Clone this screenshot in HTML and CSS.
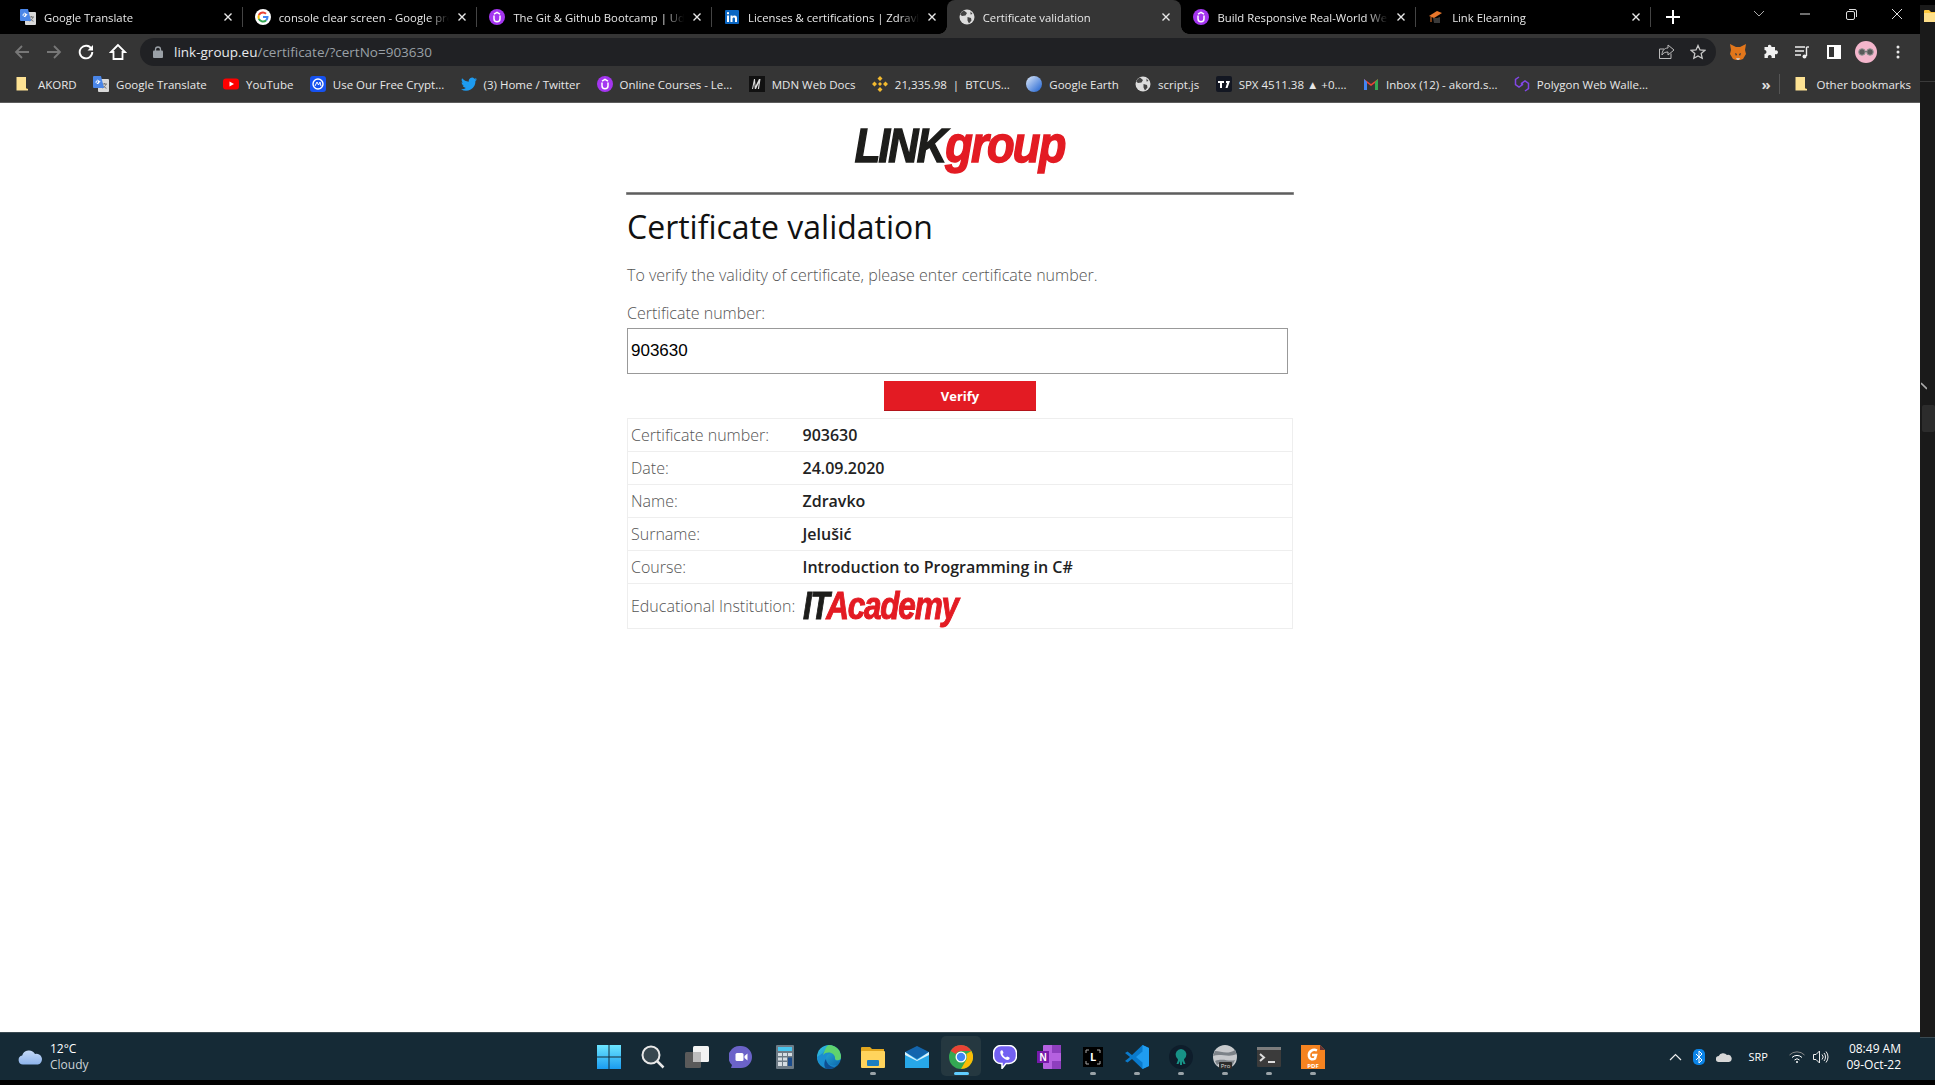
FILE: index.html
```html
<!DOCTYPE html>
<html lang="en">
<head>
<meta charset="utf-8">
<title>Certificate validation</title>
<link rel="stylesheet" href="styles.css">
</head>
<body>
<svg class="defs" width="0" height="0" aria-hidden="true">
  <symbol id="i-udemy" viewBox="0 0 16 16"><circle cx="8" cy="8" r="8" fill="#a435f0"/><path d="M5 6.5v3.2a3 3 0 0 0 6 0V6.500M5 5.200 8 3.400l3 1.800" fill="none" stroke="#fff" stroke-width="1.500"/></symbol>
  <symbol id="i-gt" viewBox="0 0 16 16"><rect x="5" y="3" width="11" height="13" rx="1" fill="#d9d9d9"/><path d="M9 8h5M11.500 7v1M13 8c-.5 2-2 3.500-3.500 4M10 9.500c.8 1.300 2 2.300 3.500 2.800" stroke="#777" fill="none"/><path d="M1 0h7l3 12H1a1 1 0 0 1-1-1V1a1 1 0 0 1 1-1z" fill="#4a86e8"/><path d="M7.300 5.400H5v1.100h1.200a1.600 1.600 0 1 1-.4-1.700" fill="none" stroke="#fff"/></symbol>
  <symbol id="i-g" viewBox="0 0 16 16"><circle cx="8" cy="8" r="8" fill="#fff"/><path d="M8 3.500a4.500 4.500 0 0 1 3 1.200" stroke="#ea4335" stroke-width="2" fill="none"/><path d="M8 3.500A4.500 4.500 0 0 0 3.900 6.200" stroke="#ea4335" stroke-width="2" fill="none"/><path d="M3.900 6.200a4.500 4.500 0 0 0 0 3.600" stroke="#fbbc05" stroke-width="2" fill="none"/><path d="M3.900 9.800A4.500 4.500 0 0 0 11.200 11.200" stroke="#34a853" stroke-width="2" fill="none"/><path d="M11.200 11.200A4.500 4.500 0 0 0 12.500 8H8" stroke="#4285f4" stroke-width="2" fill="none"/></symbol>
  <symbol id="i-globe" viewBox="0 0 16 16"><circle cx="8" cy="8" r="7.500" fill="#ddd"/><path d="M5 1.500 8 4 6.500 6.500 3 7 1.200 5.500A7.500 7.500 0 0 1 5 1.500zM8.500 8l3.500 1 .5 2.500-2.500 3-1.500-3zM11.500 2.500 13.500 5l-2 .5z" fill="#444"/></symbol>
  <symbol id="i-x" viewBox="0 0 10 10"><path d="M1.500 1.500l7 7m0-7-7 7" stroke="#e8e8e8" stroke-width="1.400" fill="none"/></symbol>
  <symbol id="i-folder" viewBox="0 0 12 14"><path d="M.5 0h9.500v12h2v1.500H.5z" fill="#fde293"/><path d="M10 11l2 1h-2z" fill="#d8b64f"/></symbol>
</svg>
<div class="screen">
  <div class="desktop">
    <div class="tabstrip">
      <div class="tab"><svg class="ic"><use href="#i-gt"/></svg><span class="tab-title">Google Translate</span><svg class="tab-x"><use href="#i-x"/></svg></div>
      <div class="tab"><svg class="ic"><use href="#i-g"/></svg><span class="tab-title">console clear screen - Google pretraga</span><svg class="tab-x"><use href="#i-x"/></svg></div>
      <div class="tab"><svg class="ic"><use href="#i-udemy"/></svg><span class="tab-title">The Git &amp; Github Bootcamp | Udemy</span><svg class="tab-x"><use href="#i-x"/></svg></div>
      <div class="tab"><svg class="ic" viewBox="0 0 16 16"><rect x="1" y="1" width="14" height="14" rx="1" fill="#0a66c2"/><rect x="3" y="6.500" width="2" height="6.500" fill="#fff"/><rect x="3" y="3.200" width="2" height="2" fill="#fff"/><path d="M6.500 6.500h2v1c.8-1.500 4.500-1.800 4.500 1.500v4h-2V9.500c0-1.500-2.500-1.500-2.500 0V13h-2z" fill="#fff"/></svg><span class="tab-title">Licenses &amp; certifications | Zdravko Jelušić</span><svg class="tab-x"><use href="#i-x"/></svg></div>
      <div class="tab tab-active"><svg class="ic"><use href="#i-globe"/></svg><span class="tab-title">Certificate validation</span><svg class="tab-x"><use href="#i-x"/></svg></div>
      <div class="tab tab-after"><svg class="ic"><use href="#i-udemy"/></svg><span class="tab-title">Build Responsive Real-World Websites</span><svg class="tab-x"><use href="#i-x"/></svg></div>
      <div class="tab"><svg class="ic" viewBox="0 0 16 16"><path d="M1 7 9 2l5 2-8 5z" fill="#e8762b"/><path d="M5 9l1 5h6V8l-3 1z" fill="#3a3a3a"/><path d="M3 8v5" stroke="#e8762b"/></svg><span class="tab-title">Link Elearning</span><svg class="tab-x"><use href="#i-x"/></svg></div>
      <svg class="plus" viewBox="0 0 14 14"><path d="M7 0v14M0 7h14" stroke="#fff" stroke-width="2"/></svg>
      <div class="winctl">
        <span class="win"><svg width="12" height="8" viewBox="0 0 12 8"><path d="M1 1l5 5 5-5" stroke="#aaa" fill="none"/></svg></span>
        <span class="win"><svg width="12" height="2" viewBox="0 0 12 2"><path d="M1 1h10" stroke="#ddd"/></svg></span>
        <span class="win"><svg width="11" height="11" viewBox="0 0 11 11"><rect x=".5" y="2.500" width="8" height="8" rx="1.500" fill="none" stroke="#ddd"/><path d="M3 .5h6a1.500 1.500 0 0 1 1.500 1.500v6" fill="none" stroke="#ddd"/></svg></span>
        <span class="win"><svg width="12" height="12" viewBox="0 0 12 12"><path d="M1 1l10 10M11 1 1 11" stroke="#ddd"/></svg></span>
      </div>
    </div>
    <div class="toolbar">
      <span class="tbtn"><svg width="16" height="16" viewBox="0 0 16 16"><path d="M15 8H2M8 2 2 8l6 6" stroke="#777" stroke-width="1.800" fill="none"/></svg></span>
      <span class="tbtn"><svg width="16" height="16" viewBox="0 0 16 16"><path d="M1 8h13M8 2l6 6-6 6" stroke="#777" stroke-width="1.800" fill="none"/></svg></span>
      <span class="tbtn"><svg width="16" height="16" viewBox="0 0 16 16"><path d="M13.500 5A6.300 6.300 0 1 0 14.300 8" stroke="#fff" stroke-width="1.900" fill="none"/><path d="M15 1v5.500H9.500z" fill="#fff"/></svg></span>
      <span class="tbtn"><svg width="18" height="18" viewBox="0 0 18 18"><path d="M9 2 2 9h2.500v7h9V9H16z" stroke="#fff" stroke-width="1.800" fill="none"/></svg></span>
      <div class="omnibox">
        <svg class="lock" width="10" height="12" viewBox="0 0 10 12"><path d="M2.500 5V3.500a2.500 2.500 0 0 1 5 0V5" stroke="#9aa0a6" fill="none" stroke-width="1.300"/><rect y="4.500" width="10" height="7.500" rx="1" fill="#9aa0a6"/></svg>
        <span class="url"><span class="url-host">link-group.eu</span>/certificate/?certNo=903630</span>
        <svg class="omni-act" width="17" height="16" viewBox="0 0 17 16"><path d="M13 9.500V14.500H1.500V5H6" stroke="#bbb" fill="none"/><path d="M10 1l6 5-6 5V8C7 8 5 9 4 11 4 7 6 4 10 4z" stroke="#bbb" fill="none"/></svg>
        <svg class="omni-act" width="16" height="16" viewBox="0 0 16 16"><path d="M8 1.500l2 4.400 4.800.5-3.600 3.200 1 4.700L8 11.900l-4.200 2.400 1-4.700L1.200 6.400 6 5.900z" stroke="#c8c8c8" stroke-width="1.300" fill="none"/></svg>
      </div>
      <div class="tools">
        <span class="tbtn"><svg width="18" height="18" viewBox="0 0 18 18"><path d="M1 1l6 3h4l6-3-1 6 1 4-3 5-3 1H7l-3-1-3-5 1-4z" fill="#e2761b"/><path d="M6 10l2 1-1 2zM12 10l-2 1 1 2z" fill="#233447"/><path d="M7 15h4l-1 2H8z" fill="#d7c1b3"/></svg></span>
        <span class="tbtn"><svg width="16" height="16" viewBox="0 0 16 16"><path d="M6 1.500a2 2 0 0 1 3.500 1.500H13v3.500a2 2 0 1 1 0 3.500v4H9.500a2 2 0 1 0-3.500 0H2.500v-4a2 2 0 1 0 0-4V3H6z" fill="#f1f1f1"/></svg></span>
        <span class="tbtn"><svg width="16" height="16" viewBox="0 0 16 16"><path d="M1 3h10M1 7h9M1 11h6" stroke="#eee" stroke-width="1.400"/><path d="M12.500 3v9" stroke="#eee" stroke-width="1.400"/><path d="M12.500 3H15" stroke="#eee" stroke-width="1.400"/><circle cx="10.500" cy="12.500" r="2" fill="#eee"/></svg></span>
        <span class="tbtn"><svg width="14" height="14" viewBox="0 0 14 14"><path d="M0 0h14v14H0zM2 2v10h5V2z" fill="#fff" fill-rule="evenodd"/></svg></span>
        <span class="tbtn"><svg width="22" height="22" viewBox="0 0 22 22"><circle cx="11" cy="11" r="11" fill="#f4b6cc"/><circle cx="7" cy="11" r="3.300" fill="#5a5a5a" stroke="#999"/><circle cx="15" cy="11" r="3.300" fill="#5a5a5a" stroke="#999"/><path d="M10 10.500h2" stroke="#777"/></svg></span>
        <span class="tbtn"><svg width="4" height="14" viewBox="0 0 4 14"><circle cx="2" cy="2" r="1.500" fill="#e8e8e8"/><circle cx="2" cy="7" r="1.500" fill="#e8e8e8"/><circle cx="2" cy="12" r="1.500" fill="#e8e8e8"/></svg></span>
      </div>
    </div>
    <div class="bookmarks">
      <span class="bm bm-f"><svg class="ic-f"><use href="#i-folder"/></svg>AKORD</span>
      <span class="bm"><svg class="ic"><use href="#i-gt"/></svg>Google Translate</span>
      <span class="bm"><svg class="ic" viewBox="0 0 16 16"><rect y="2.500" width="16" height="11" rx="3" fill="#f00"/><path d="M6.500 5.500 11 8l-4.500 2.500z" fill="#fff"/></svg>YouTube</span>
      <span class="bm"><svg class="ic" viewBox="0 0 16 16"><rect width="16" height="16" rx="3" fill="#1652f0"/><circle cx="8" cy="8" r="5" fill="none" stroke="#fff" stroke-width="1.400"/><path d="M5 10 7 6l1.500 3L10 6l1 4" stroke="#fff" fill="none"/></svg>Use Our Free Crypt...</span>
      <span class="bm"><svg class="ic" viewBox="0 0 16 16"><path d="M16 3.200c-.6.300-1.200.4-1.900.5.700-.4 1.200-1 1.400-1.800-.6.400-1.300.6-2.100.8a3.300 3.300 0 0 0-5.600 3C5.100 5.600 2.700 4.300 1.100 2.300.2 3.800.7 5.700 2.100 6.700c-.5 0-1-.2-1.500-.4 0 1.600 1.100 3 2.600 3.300-.5.100-1 .1-1.500 0 .4 1.300 1.600 2.200 3.100 2.300A6.600 6.600 0 0 1 0 13.200 9.300 9.300 0 0 0 14.400 5c.6-.5 1.200-1.100 1.600-1.800z" fill="#1d9bf0"/></svg>(3) Home / Twitter</span>
      <span class="bm"><svg class="ic"><use href="#i-udemy"/></svg>Online Courses - Le...</span>
      <span class="bm"><svg class="ic" viewBox="0 0 16 16"><rect width="16" height="16" fill="#111"/><path d="M3 13 5 3h1l.5 7L10 3h1.500L10 13H8.800l1-6L7 13H5.800L5.300 7 4 13z" fill="#ddd"/></svg>MDN Web Docs</span>
      <span class="bm"><svg class="ic" viewBox="0 0 16 16"><path d="M8 0l2.500 2.500L8 5 5.500 2.500zM2.500 5.500 5 8l-2.500 2.500L0 8zM13.500 5.500 16 8l-2.500 2.500L11 8zM8 11l2.500 2.500L8 16l-2.500-2.500zM8 6l2 2-2 2-2-2z" fill="#f3ba2f"/></svg>21,335.98 &nbsp;| &nbsp;BTCUS...</span>
      <span class="bm"><svg class="ic" viewBox="0 0 16 16"><defs><linearGradient id="ge" x1="0" y1="0" x2="1" y2="1"><stop offset="0" stop-color="#dfeafa"/><stop offset="1" stop-color="#1a5fd0"/></linearGradient></defs><circle cx="8" cy="8" r="8" fill="url(#ge)"/></svg>Google Earth</span>
      <span class="bm"><svg class="ic"><use href="#i-globe"/></svg>script.js</span>
      <span class="bm"><svg class="ic" viewBox="0 0 16 16"><rect width="16" height="16" rx="2" fill="#131722"/><path d="M2 5h6v2H6v5H4V7H2zM10 5h4l-2.500 7h-2l1.500-5h-1z" fill="#fff"/></svg>SPX 4511.38 ▲ +0....</span>
      <span class="bm"><svg class="ic" viewBox="0 0 16 16"><path d="M1 3v11h3V7l4 3 4-3v7h3V3L8 8z" fill="#ea4335"/><path d="M1 3v11h3V6z" fill="#4285f4"/><path d="M12 6v8h3V3z" fill="#34a853"/></svg>Inbox (12) - akord.s...</span>
      <span class="bm"><svg class="ic" viewBox="0 0 16 16"><path d="M5 1 1.500 3.500v5L5 11l3.500-2.500V7.500M11 15l3.500-2.500v-5L11 5 7.500 7.500v1" stroke="#8247e5" stroke-width="1.500" fill="none"/></svg>Polygon Web Walle...</span>
      <span class="bm-more">»</span>
      <span class="bm-sep"></span>
      <span class="bm bm-other"><svg class="ic-f"><use href="#i-folder"/></svg>Other bookmarks</span>
    </div>
    <main class="page">
      <div class="sheet">
        <div class="logo-row"><span class="logo"><span class="logo-k">LINK</span><span class="logo-r">group</span></span></div>
        <hr class="rule">
        <h1 class="title">Certificate validation</h1>
        <p class="intro">To verify the validity of certificate, please enter certificate number.</p>
        <label class="field-label" for="cert">Certificate number:</label>
        <input class="field" id="cert" type="text" value="903630">
        <div class="verify-row"><button class="verify" type="button">Verify</button></div>
        <table class="result">
          <tr><th>Certificate number:</th><td>903630</td></tr>
          <tr><th>Date:</th><td>24.09.2020</td></tr>
          <tr><th>Name:</th><td>Zdravko</td></tr>
          <tr><th>Surname:</th><td>Jelušić</td></tr>
          <tr><th>Course:</th><td>Introduction to Programming in C#</td></tr>
          <tr class="row-logo"><th>Educational Institution:</th><td><span class="itlogo"><span class="it-k">IT</span><span class="it-r">Academy</span></span></td></tr>
        </table>
      </div>
    </main>
    <footer class="taskbar">
      <div class="weather">
        <svg width="25" height="16" viewBox="0 0 25 16"><defs><linearGradient id="cl" x1="0" y1="0" x2="0" y2="1"><stop offset="0" stop-color="#c4d9f7"/><stop offset="1" stop-color="#8db4ec"/></linearGradient></defs><path d="M5 15.500a4.500 4.500 0 0 1-.8-8.900A7 7 0 0 1 17 5a5.300 5.300 0 0 1 3 10.500z" fill="url(#cl)"/></svg>
        <div class="weather-text"><span class="temp">12°C</span><span class="cond">Cloudy</span></div>
      </div>
      <div class="apps">
        <span class="app"><svg width="24" height="24" viewBox="0 0 24 24"><defs><linearGradient id="wn" x1="0" y1="0" x2="0" y2="1"><stop offset="0" stop-color="#6ce5ff"/><stop offset="1" stop-color="#1a9cf0"/></linearGradient></defs><path d="M0 0h11.500v11.500H0zM12.500 0H24v11.500H12.500zM0 12.500h11.500V24H0zM12.500 12.500H24V24H12.500z" fill="url(#wn)"/></svg></span>
        <span class="app"><svg width="24" height="24" viewBox="0 0 24 24"><circle cx="10" cy="10" r="8.500" fill="#37474f" stroke="#e8e8e8" stroke-width="2"/><path d="M16 16l6.500 6.500" stroke="#e8e8e8" stroke-width="2.500"/></svg></span>
        <span class="app"><svg width="24" height="24" viewBox="0 0 24 24"><rect x="8" y="1" width="16" height="16" rx="1.500" fill="#f3f3f3"/><rect y="7" width="16" height="16" rx="1.500" fill="#5a5a5a"/><rect x="8" y="7" width="8" height="10" fill="#bdbdbd"/></svg></span>
        <span class="app"><svg width="24" height="24" viewBox="0 0 24 24"><path d="M12 1a11 11 0 0 1 0 22H2l1-3A11 11 0 0 1 12 1z" fill="#6b63c9"/><rect x="6.500" y="8" width="8" height="8" rx="1.500" fill="#fff"/><path d="M15.500 11l3-2.500v7l-3-2.500z" fill="#fff"/></svg></span>
        <span class="app"><svg width="18" height="24" viewBox="0 0 18 24"><rect width="18" height="24" rx="1" fill="#6d7b86"/><rect x="2" y="2" width="14" height="4" fill="#49c5ee"/><path d="M2 8h4v3H2zM7 8h4v3H7zM12 8h4v3h-4zM2 12.500h4v3H2zM7 12.500h4v3H7zM2 17h4v4H2zM7 17h4v4H7z" fill="#d6dde2"/><path d="M12 12.500h4V21h-4z" fill="#1b4c8c"/></svg></span>
        <span class="app"><svg width="24" height="24" viewBox="0 0 24 24"><defs><linearGradient id="ed" x1="0" y1="0" x2="1" y2="1"><stop offset="0" stop-color="#32c6e6"/><stop offset="1" stop-color="#0a5fa8"/></linearGradient></defs><circle cx="12" cy="12" r="12" fill="url(#ed)"/><path d="M6 8a10 10 0 0 1 18 5c0 3-4 3-6 2 2-4-2-7-5-6.500S9 11 9 14c0 5 6 8 11 6A12 12 0 0 1 0 12z" fill="#1b8ed0"/><path d="M12 0A12 12 0 0 1 24 12c0 4-5 4-6 2 1-6-8-9-12-4C8 4 10 0 12 0z" fill="#5fd36e"/><path d="M9 14c0 3 3 8 9 8a12 12 0 0 1-7 2C6 24 7 16 9 14z" fill="#0e4f92"/></svg></span>
        <span class="app"><svg width="24" height="24" viewBox="0 0 24 24"><path d="M0 3a1 1 0 0 1 1-1h8l2 2h12v4H0z" fill="#e2a71f"/><rect y="6" width="24" height="17" rx="1" fill="#ffd45c"/><rect x="6" y="15" width="12" height="6" rx="1" fill="#1c7fc1"/></svg></span>
        <span class="app"><svg width="24" height="24" viewBox="0 0 24 24"><rect y="7" width="24" height="16" fill="#27a7e8"/><path d="M0 7l12-6 12 6-12 7z" fill="#1365ae"/><path d="M0 7l12 8 12-8v3l-12 6-12-6z" fill="#d7f0fc"/></svg></span>
        <span class="app app-active"><svg width="24" height="24" viewBox="0 0 24 24"><circle cx="12" cy="12" r="12" fill="#34a853"/><path d="M12 0a12 12 0 0 1 10.400 6H12a6 6 0 0 0-5.200 3L1.600 6A12 12 0 0 1 12 0z" fill="#ea4335"/><path d="M22.400 6A12 12 0 0 1 12 24l5.200-9A6 6 0 0 0 17.200 9z" fill="#fbbc05"/><circle cx="12" cy="12" r="5.500" fill="#fff"/><circle cx="12" cy="12" r="4.200" fill="#4285f4"/></svg></span>
        <span class="app"><svg width="24" height="24" viewBox="0 0 24 24"><path d="M8 .5h8a7.500 7.500 0 0 1 7.500 7.500v3a7.500 7.500 0 0 1-7.500 7.500h-3l-4 5v-5A7.500 7.500 0 0 1 .5 11V8A7.500 7.500 0 0 1 8 .5z" fill="#7360f2" stroke="#fff" stroke-width="1.500"/><path d="M7.500 6c1-1 2-1 2.500.5l.5 1.500-1 1c.5 1.500 2 3 3.500 3.500l1-1 1.500.5c1.500.5 1.500 1.500.5 2.500-3 2-10-4-8.500-8.500z" fill="#fff"/></svg></span>
        <span class="app"><svg width="24" height="24" viewBox="0 0 24 24"><rect x="6" width="18" height="24" rx="1" fill="#b561e0"/><path d="M15 0h9v8h-9zM15 16h9v8h-9z" fill="#8e3fbe"/><rect y="6" width="12" height="12" fill="#7719aa"/><text x="6" y="16" class="svg-n">N</text></svg></span>
        <span class="app"><svg width="20" height="20" viewBox="0 0 20 20"><rect width="20" height="20" fill="#000"/><path d="M3 6V3h3M14 3h3v3M17 14v3h-3M6 17H3v-3" stroke="#aaa" fill="none"/><text x="10" y="14" class="svg-l">L</text></svg></span>
        <span class="app"><svg width="24" height="24" viewBox="0 0 24 24"><path d="M17.500 0 24 3v18l-6.500 3L7 14l-4.500 3.500L0 16l5-4-5-4 2.500-1.500L7 10z" fill="#0a7acc"/><path d="M17.500 0 24 3v18l-6.500 3zM17.500 6.500 11 12l6.500 5.500z" fill="#1f9cf0" fill-rule="evenodd"/></svg></span>
        <span class="app"><svg width="24" height="24" viewBox="0 0 24 24"><circle cx="12" cy="12" r="12" fill="#0e1d2b"/><path d="M12 4a5.500 5.500 0 0 1 5 7.500c-.5 1.500-2 2-2 3.500l1.500 4h-2L13 16v4h-2v-4l-1.500 3h-2L9 15c0-1.500-1.500-2-2-3.500A5.500 5.500 0 0 1 12 4z" fill="#179287"/></svg></span>
        <span class="app"><svg width="24" height="24" viewBox="0 0 24 24"><circle cx="12" cy="12" r="12" fill="#c7c9cc"/><path d="M2 6c6 0 12 4 20-1l1.500 4C16 13 7 8 0 11zM2 16c8-3 14 1 20-1l-3 6C12 19 8 17 4 20z" fill="#7c8288"/><rect x="6" y="17" width="13" height="7" rx="1" fill="#2b2b2b"/><text x="12.500" y="23" class="svg-pro">Pro</text></svg></span>
        <span class="app"><svg width="24" height="20" viewBox="0 0 24 20"><rect width="24" height="20" rx="1" fill="#3b3b3b"/><rect width="24" height="3" fill="#7d7d7d"/><path d="M3 7l4 3.500L3 14" stroke="#ddd" stroke-width="2" fill="none"/><path d="M11 15h7" stroke="#ddd" stroke-width="2"/></svg></span>
        <span class="app"><svg width="24" height="24" viewBox="0 0 24 24"><path d="M0 0h19l5 5v19H0z" fill="#f58320"/><path d="M19 0l5 5h-5z" fill="#633"/><path d="M16 5.500c-4-2-9 1-8 6 .5 3 4 3.500 6 2l1-3.500h-4" stroke="#fff" stroke-width="2.500" fill="none"/><text x="12" y="22.500" class="svg-pdf">PDF</text></svg></span>
      </div>
      <div class="tray">
        <svg class="tray-chev" width="13" height="8" viewBox="0 0 13 8"><path d="M1 7l5.500-5.500L12 7" stroke="#eee" stroke-width="1.200" fill="none"/></svg>
        <svg class="tray-bt" width="12" height="16" viewBox="0 0 12 16"><rect width="12" height="16" rx="5" fill="#0a84e8"/><path d="M3 5l6 6-3 3V2l3 3-6 6" stroke="#fff" fill="none"/></svg>
        <svg class="tray-od" width="16" height="10" viewBox="0 0 16 10"><path d="M3 10a3 3 0 0 1-.3-6A5 5 0 0 1 11 3a3.500 3.500 0 0 1 2 7z" fill="#d8d8d8"/></svg>
        <span class="tray-lang">SRP</span>
        <svg class="tray-wifi" width="16" height="12" viewBox="0 0 16 12"><path d="M.5 4a10.500 10.500 0 0 1 15 0" stroke="#888" fill="none"/><path d="M3 6.500a7 7 0 0 1 10 0M5.500 9a3.500 3.500 0 0 1 5 0" stroke="#fff" fill="none"/><circle cx="8" cy="11" r="1" fill="#fff"/></svg>
        <svg class="tray-vol" width="16" height="14" viewBox="0 0 16 14"><path d="M.5 4.500h2.500l3.500-3.500v12L3 9.500H.5z" stroke="#eee" fill="none"/><path d="M9 4.500a3.500 3.500 0 0 1 0 5M11 3a6 6 0 0 1 0 8M13 1.500a8.500 8.500 0 0 1 0 11" stroke="#eee" fill="none"/></svg>
        <div class="clock"><span>08:49 AM</span><span>09-Oct-22</span></div>
      </div>
    </footer>
    <div class="underbar"></div>
  </div>
  <aside class="sidestrip">
    <svg class="side-folder" width="11" height="13" viewBox="0 0 11 13"><path d="M0 2a1 1 0 0 1 1-1h4l2 2h4v10H0z" fill="#ffc83d"/><path d="M0 4h11v9H0z" fill="#ffe08a"/></svg>
    <div class="side-line"></div>
    <svg class="side-chev" width="6" height="8" viewBox="0 0 6 8"><path d="M0 1l6 6" stroke="#aaa" stroke-width="1.600"/></svg>
    <div class="side-thumb"></div>
    <div class="side-task"></div>
  </aside>
</div>
</body>
</html>
```
FILE: styles.css
```css
* { box-sizing: border-box; }
html, body { margin: 0; padding: 0; height: 100%; overflow: hidden; background: #000; }
body { font-family: "Open Sans", "Liberation Sans", sans-serif; }
.defs { position: absolute; }
.screen { display: flex; width: 1935px; height: 1085px; }
.desktop { width: 1920px; display: flex; flex-direction: column; flex: none; }

/* tab strip */
.tabstrip { height: 34px; display: flex; align-items: center; padding-left: 8px; background: #000; flex: none; }
.tab { width: 234.7px; height: 34px; padding: 0 8px 0 12px; display: flex; align-items: center; gap: 8px; color: #e8e8e8; font-size: 11.3px; line-height: 33px; position: relative; flex: none; }
.tab::after { content: ""; position: absolute; right: 0; top: 7px; height: 20px; width: 1px; background: #444; }
.tab:nth-child(4)::after, .tab-active::after { display: none; }
.tab-active { background: #353535; border-radius: 8px 8px 0 0; }
.tab-active::before { content: ""; position: absolute; left: -8px; bottom: 0; width: 8px; height: 8px; background: radial-gradient(circle at 0 0, #000 7.500px, #353535 8px); }
.tab-after::before { content: ""; position: absolute; left: 0; bottom: 0; width: 8px; height: 8px; background: radial-gradient(circle at 100% 0, #000 7.500px, #353535 8px); }
.ic { width: 16px; height: 16px; flex: none; }
.tab-title { flex: 1; white-space: nowrap; overflow: hidden; -webkit-mask-image: linear-gradient(90deg, #000 88%, transparent 100%); mask-image: linear-gradient(90deg, #000 88%, transparent 100%); }
.tab-x { width: 10px; height: 10px; margin-right: 2px; flex: none; }
.plus { width: 14px; height: 14px; margin-left: 15px; flex: none; }
.winctl { margin-left: auto; display: flex; height: 28px; align-self: flex-start; }
.win { width: 46px; display: flex; align-items: center; justify-content: center; }

/* toolbar */
.toolbar { height: 35px; background: #353535; display: flex; align-items: center; padding: 0 6px; flex: none; }
.tbtn { width: 32px; height: 28px; display: flex; align-items: center; justify-content: center; flex: none; }
.omnibox { margin-left: 6px; width: 1576px; height: 28px; border-radius: 14px; background: #202124; display: flex; align-items: center; padding: 0 10px 0 13px; flex: none; }
.lock { margin-right: 11px; flex: none; }
.url { flex: 1; font-size: 13.5px; color: #9aa0a6; white-space: nowrap; }
.url-host { color: #e8eaed; }
.omni-act { margin-left: 15px; flex: none; }
.tools { display: flex; margin-left: 6px; }

/* bookmarks */
.bookmarks { height: 34px; background: #353535; border-bottom: 1px solid #5c5c5c; display: flex; align-items: center; padding: 0 9px 3px 16px; gap: 16.4px; color: #e8e8e8; font-size: 11.5px; white-space: nowrap; flex: none; }
.bm { display: flex; align-items: center; gap: 7px; flex: none; }
.bm-f { gap: 10px; }
.ic-f { width: 12px; height: 14px; flex: none; }
.bm-more { margin-left: auto; color: #ddd; font-size: 15px; font-weight: 700; line-height: 1; }
.bm-sep { width: 1px; height: 20px; background: #555; margin: 0 -2px 0 -8px; }
.bm-other { gap: 10px; }

/* page */
.page { flex: 1; background: #fff; display: flex; justify-content: center; }
.sheet { width: 668px; }
.logo-row { height: 89px; padding-top: 15px; text-align: center; }
.logo { display: inline-block; font: italic 700 52px/52px "Liberation Sans", sans-serif; transform: scaleX(.87); white-space: nowrap; letter-spacing: -2px; -webkit-text-stroke: 1.500px currentColor; }
.logo-k { color: #1d1d1b; font-size: 48px; }
.logo-r { color: #e31b23; }
.rule { height: 3px; margin: 0; border: 0; background: #5e5e5e; box-shadow: inset 0 0 0 .5px #aaa; }
.title { margin: 10px 0 0 1px; font-weight: 400; font-size: 32px; line-height: 44px; color: #111; }
.intro { margin: 15px 0 0 1px; font-weight: 300; font-size: 16px; line-height: 22px; color: #555; }
.field-label { display: block; margin: 16px 0 0 1px; font-weight: 300; font-size: 16px; line-height: 22px; color: #555; }
.field { display: block; width: 661px; height: 46px; margin: 4px 0 0 1px; padding: 0 3px; border: 1px solid #999; border-radius: 0; background: #fff; font: 17px "Liberation Sans", sans-serif; color: #000; outline: 0; }
.verify-row { margin-top: 7px; display: flex; justify-content: center; }
.verify { width: 152px; height: 30px; border: 0; border-radius: 0; background: #e31b23; color: #fff; font: 700 13px "Open Sans", sans-serif; padding: 0; border-bottom: 1px solid #b3141a; }
.result { width: 666px; margin: 7px 0 0 1px; border-collapse: collapse; font-size: 16px; }
.result th, .result td { border: 1px solid #eee; border-width: 1px 0; height: 33px; padding: 0 3px; line-height: 22px; white-space: nowrap; text-align: left; }
.result th { width: 172px; font-weight: 300; color: #555; border-left-width: 1px; }
.result td { font-weight: 600; color: #222; border-right-width: 1px; }
.row-logo th, .row-logo td { height: 45px; }
.itlogo { display: inline-block; font: italic 700 38px/38px "Liberation Sans", sans-serif; white-space: nowrap; transform: scaleX(.83); transform-origin: 0 50%; letter-spacing: -1.500px; -webkit-text-stroke: 1px currentColor; vertical-align: middle; }
.it-k { color: #1d1d1b; }
.it-r { color: #e31b23; }

/* taskbar */
.taskbar { height: 48px; background: #152a36; border-top: 1px solid #3a4a52; display: flex; align-items: center; position: relative; flex: none; color: #fff; font-size: 12px; }
.weather { display: flex; align-items: center; gap: 7px; padding-left: 18px; width: 587px; flex: none; }
.weather-text { display: flex; flex-direction: column; line-height: 16px; }
.temp { color: #fff; }
.cond { color: #ccd3d6; }
.apps { display: flex; flex: none; }
.app { width: 44px; height: 47px; display: flex; align-items: center; justify-content: center; position: relative; }
.app:nth-child(7)::after, .app:nth-child(n+12)::after { content: ""; position: absolute; bottom: 5px; left: 19px; width: 6px; height: 3px; border-radius: 2px; background: #9aa3a8; }
.app-active::before { content: ""; position: absolute; left: 2px; right: 2px; top: 3px; bottom: 4px; border-radius: 5px; background: #253840; }
.app-active svg { position: relative; }
.app-active::after { content: ""; position: absolute; bottom: 5px; left: 15px; width: 15px; height: 3px; border-radius: 2px; background: #60cdff; }
.svg-n { font: 700 10px "Liberation Sans", sans-serif; fill: #fff; text-anchor: middle; }
.svg-l { font: 700 11px "Open Sans", sans-serif; fill: #fff; text-anchor: middle; }
.svg-pro { font: 6px "Open Sans", sans-serif; fill: #ddd; text-anchor: middle; }
.svg-pdf { font: 700 6px "Open Sans", sans-serif; fill: #fff; text-anchor: middle; }
.tray { margin-left: auto; display: flex; align-items: center; padding-right: 19px; }
.tray-bt { margin-left: 11px; }
.tray-od { margin-left: 11px; }
.tray-lang { margin-left: 16px; width: 22px; font-size: 11px; }
.tray-wifi { margin-left: 19px; }
.tray-vol { margin-left: 8px; }
.clock { margin-left: 17px; display: flex; flex-direction: column; align-items: flex-end; line-height: 16px; }
.underbar { height: 5px; background: #000; flex: none; }

/* neighbouring window edge */
.sidestrip { flex: 1; background: #1a1a1a; margin-top: 5px; margin-bottom: 5px; display: flex; flex-direction: column; overflow: hidden; }
.side-folder { margin: 4px 0 0 4px; flex: none; }
.side-line { height: 1px; background: #3a3a3a; margin-top: 59px; flex: none; }
.side-chev { margin: 300px 0 0 1px; flex: none; }
.side-thumb { height: 27px; margin: 15px 0 0 2px; background: #2c2c2c; border-radius: 2px; flex: none; }
.side-task { margin-top: auto; height: 43px; background: #152a36; border-top: 1px solid #3a4a52; flex: none; }
```
